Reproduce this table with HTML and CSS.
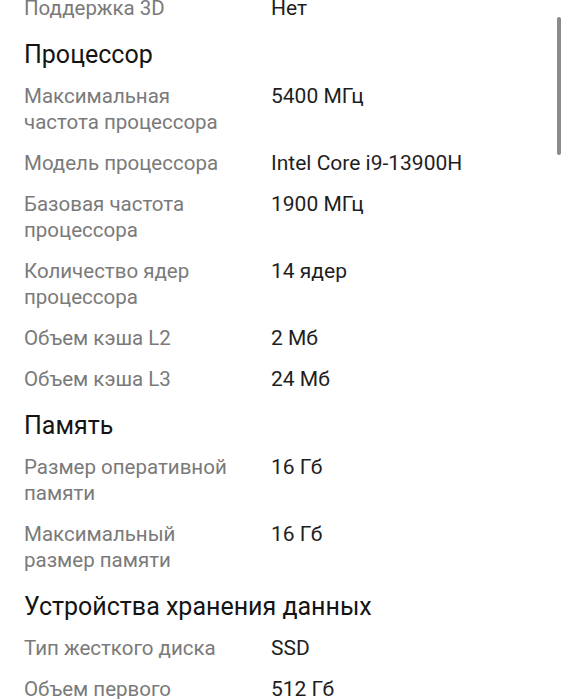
FILE: index.html
```html
<!DOCTYPE html>
<html lang="ru">
<head>
<meta charset="utf-8">
<link rel="stylesheet" href="styles.css">
</head>
<body>
<div class="page">
  <div class="specs">
    <div class="row"><div class="label">Поддержка 3D</div><div class="value">Нет</div></div>

    <h2 class="heading">Процессор</h2>
    <div class="row"><div class="label">Максимальная частота процессора</div><div class="value">5400 МГц</div></div>
    <div class="row"><div class="label">Модель процессора</div><div class="value">Intel Core i9-13900H</div></div>
    <div class="row"><div class="label">Базовая частота процессора</div><div class="value">1900 МГц</div></div>
    <div class="row"><div class="label">Количество ядер процессора</div><div class="value">14 ядер</div></div>
    <div class="row"><div class="label">Объем кэша L2</div><div class="value">2 Мб</div></div>
    <div class="row"><div class="label">Объем кэша L3</div><div class="value">24 Мб</div></div>

    <h2 class="heading">Память</h2>
    <div class="row"><div class="label">Размер оперативной памяти</div><div class="value">16 Гб</div></div>
    <div class="row"><div class="label">Максимальный размер памяти</div><div class="value">16 Гб</div></div>

    <h2 class="heading">Устройства хранения данных</h2>
    <div class="row"><div class="label">Тип жесткого диска</div><div class="value">SSD</div></div>
    <div class="row"><div class="label">Объем первого диска</div><div class="value">512 Гб</div></div>
  </div>
  <div class="scrollbar"></div>
</div>
</body>
</html>
```
FILE: styles.css
```css
html, body {
  margin: 0;
  padding: 0;
  background: #ffffff;
  overflow: hidden;
}
body {
  width: 566px;
  height: 699px;
  font-family: Roboto, "Noto Sans", sans-serif;
}
.page {
  position: relative;
  height: 699px;
  overflow: hidden;
}
.specs {
  margin-top: -5px;
  padding: 0 24px;
}
.row {
  display: grid;
  grid-template-columns: 247px 1fr;
  padding-bottom: 15px;
  line-height: 26px;
}
.label {
  font-size: 20.5px;
  color: #7a7a7a;
  padding-right: 41px;
}
.value {
  font-size: 21px;
  color: #1e1e1e;
}
.heading {
  margin: 4px 0 13px;
  font-size: 25px;
  line-height: 30px;
  font-weight: 400;
  color: #141414;
}
.scrollbar {
  position: absolute;
  right: 5px;
  top: 17px;
  width: 4px;
  height: 138px;
  border-radius: 2px;
  background: #8a8a8a;
}
```
